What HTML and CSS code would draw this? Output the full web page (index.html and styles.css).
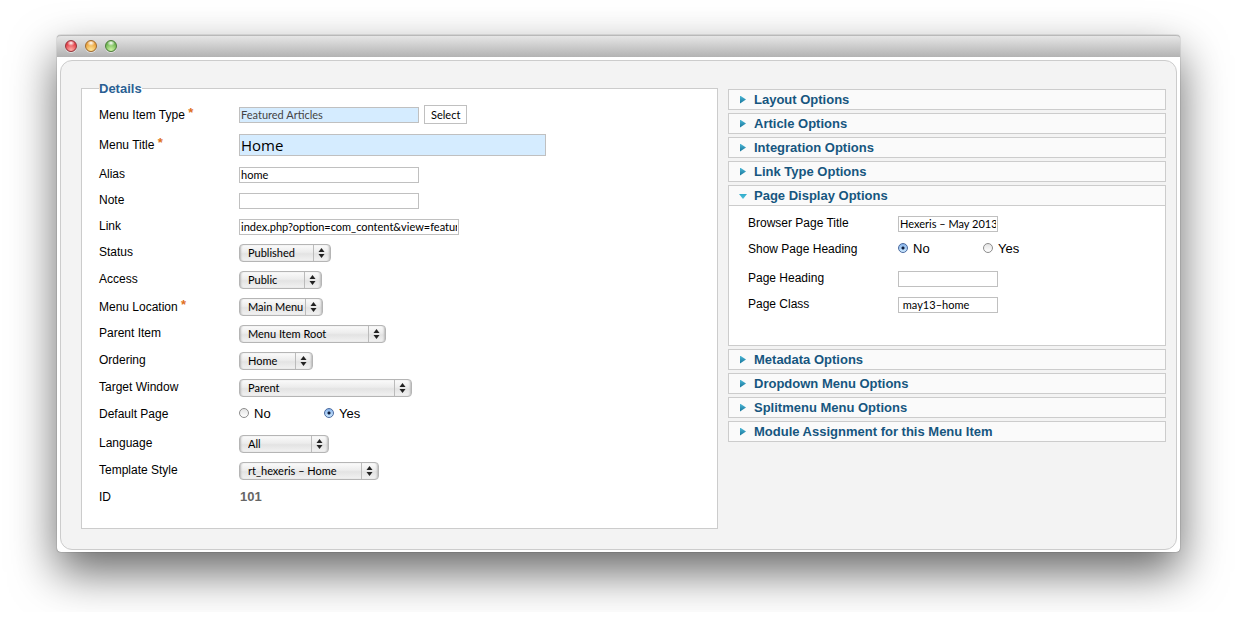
FILE: index.html
```html
<!DOCTYPE html>
<html lang="en">
<head>
<meta charset="utf-8">
<title>Edit Menu Item</title>
<link rel="stylesheet" href="styles.css">
</head>
<body>
<div class="window">
  <header class="titlebar">
    <button class="light light-red" type="button" aria-label="Close"></button>
    <button class="light light-amber" type="button" aria-label="Minimize"></button>
    <button class="light light-green" type="button" aria-label="Zoom"></button>
  </header>
  <form class="panel">
    <fieldset class="details">
      <legend>Details</legend>
      <div class="row"><label for="type">Menu Item Type <span class="star">*</span></label><div class="control"><input class="text required" id="type" type="text" value="Featured Articles" readonly><button class="select-btn" type="button">Select</button></div></div>
      <div class="row row-title"><label for="title">Menu Title <span class="star">*</span></label><div class="control"><input class="text title required" id="title" type="text" value="Home"></div></div>
      <div class="row"><label for="alias">Alias</label><div class="control"><input class="text" id="alias" type="text" value="home"></div></div>
      <div class="row"><label for="note">Note</label><div class="control"><input class="text" id="note" type="text"></div></div>
      <div class="row"><label for="link">Link</label><div class="control"><input class="text link" id="link" type="text" value="index.php?option=com_content&amp;view=featured"></div></div>
      <div class="row row-select"><label for="status">Status</label><div class="control"><select class="w-92" id="status"><option>Published</option></select></div></div>
      <div class="row row-select"><label for="access">Access</label><div class="control"><select class="w-83" id="access"><option>Public</option></select></div></div>
      <div class="row row-select"><label for="location">Menu Location <span class="star">*</span></label><div class="control"><select class="w-84" id="location"><option>Main Menu</option></select></div></div>
      <div class="row row-select"><label for="parent">Parent Item</label><div class="control"><select class="w-147" id="parent"><option>Menu Item Root</option></select></div></div>
      <div class="row row-select"><label for="ordering">Ordering</label><div class="control"><select class="w-74" id="ordering"><option>Home</option></select></div></div>
      <div class="row row-select"><label for="target">Target Window</label><div class="control"><select class="w-173" id="target"><option>Parent</option></select></div></div>
      <div class="row row-radio" role="radiogroup" aria-labelledby="default-label"><span id="default-label">Default Page</span><div class="radios"><label><input type="radio" name="default">No</label><label><input type="radio" name="default" checked>Yes</label></div></div>
      <div class="row row-select"><label for="language">Language</label><div class="control"><select class="w-90" id="language"><option>All</option></select></div></div>
      <div class="row row-select"><label for="style">Template Style</label><div class="control"><select class="w-140" id="style"><option>rt_hexeris – Home</option></select></div></div>
      <div class="row row-select"><span>ID</span><output class="id">101</output></div>
    </fieldset>
    <div class="options">
      <details><summary>Layout Options</summary></details>
      <details><summary>Article Options</summary></details>
      <details><summary>Integration Options</summary></details>
      <details><summary>Link Type Options</summary></details>
      <details open><summary>Page Display Options</summary>
        <div class="pane">
          <div class="row"><label for="page-title">Browser Page Title</label><div class="control"><input class="text small" id="page-title" type="text" value="Hexeris – May 2013"></div></div>
          <div class="row row-radio" role="radiogroup" aria-labelledby="show-label"><span id="show-label">Show Page Heading</span><div class="radios"><label><input type="radio" name="show" checked>No</label><label><input type="radio" name="show">Yes</label></div></div>
          <div class="row"><label for="heading">Page Heading</label><div class="control"><input class="text small" id="heading" type="text"></div></div>
          <div class="row"><label for="class">Page Class</label><div class="control"><input class="text small" id="class" type="text" value=" may13–home"></div></div>
        </div>
      </details>
      <details><summary>Metadata Options</summary></details>
      <details><summary>Dropdown Menu Options</summary></details>
      <details><summary>Splitmenu Menu Options</summary></details>
      <details><summary>Module Assignment for this Menu Item</summary></details>
    </div>
  </form>
</div>
</body>
</html>
```
FILE: styles.css
```css
* { box-sizing: border-box; }
body {
  margin: 0;
  padding: 35px 57px 60px;
  background: #fff;
  color: #000;
  font: 13px/16px "Liberation Sans", Arial, sans-serif;
}
.window {
  background: #fff;
  border-radius: 4px;
  box-shadow: 0 0 1px rgba(0,0,0,.8), 0 20px 46px rgba(0,0,0,.6);
  padding-bottom: 2px;
}
.titlebar {
  display: flex;
  align-items: center;
  gap: 8px;
  height: 22px;
  padding: 0 0 1px 8px;
  border-top: 1px solid #b9b9b9;
  border-radius: 4px 4px 0 0;
  background: linear-gradient(#e6e6e6, #b2b2b2);
}
.light {
  width: 12px;
  height: 12px;
  padding: 0;
  border: 1px solid;
  border-radius: 50%;
  box-shadow: 0 1px 0 rgba(255,255,255,.5);
}
.light-red { border-color: #96343a; background: radial-gradient(ellipse 4px 3px at 50% 20%, #fff, transparent), radial-gradient(circle at 50% 90%, #ffb0a8, #e0343f 75%); }
.light-amber { border-color: #a06a2c; background: radial-gradient(ellipse 4px 3px at 50% 20%, #fff, transparent), radial-gradient(circle at 50% 90%, #ffe79a, #e99d35 75%); }
.light-green { border-color: #4c7d38; background: radial-gradient(ellipse 4px 3px at 50% 20%, #fff, transparent), radial-gradient(circle at 50% 90%, #cdf5a4, #67b04b 75%); }
.panel {
  display: grid;
  grid-template-columns: minmax(0, 637fr) minmax(0, 438fr);
  align-items: start;
  gap: 10px;
  margin: 3px 3px 0;
  padding: 18px 10px 20px 20px;
  border: 1px solid #ccc;
  border-radius: 12px;
  background: #f3f3f3;
}
.details {
  min-width: 0;
  margin: 0;
  padding: 4px 17px 17px;
  border: 1px solid #ccc;
  background: #fff;
}
legend {
  padding: 2px 0 0;
  color: #2a5f93;
  font-weight: bold;
}
.row {
  display: grid;
  grid-template-columns: 140px 1fr;
  align-items: center;
  min-height: 26px;
  font-size: 12px;
}
.row-title { min-height: 34px; }
.row-select { min-height: 27px; padding-bottom: 1px; }
.row-radio { min-height: 29px; padding-bottom: 3px; }
.control { display: flex; align-items: center; gap: 5px; padding-top: 1px; }
.row-select .control { padding-top: 2px; }
.star { color: #e0701c; font-size: 13px; font-weight: bold; vertical-align: 2px; }
.text {
  width: 180px;
  height: 16px;
  padding: 0 1px;
  border: 1px solid #c0c0c0;
  border-radius: 0;
  background: #fff;
  color: #000;
  font: 11px/14px Lato, sans-serif;
}
.required { background: #d5ecff; }
.text:read-only { color: #444; }
.link { width: 220px; }
.small { width: 100px; }
.title { width: 307px; height: 22px; font: 15px/20px "Open Sans", sans-serif; }
.select-btn {
  height: 19px;
  padding: 0 6px;
  border: 1px solid #c0c0c0;
  background: #fff;
  color: #000;
  font: 11px/17px Lato, sans-serif;
}
select {
  appearance: none;
  height: 18px;
  padding: 0 18px 0 8px;
  border: 1px solid #b5b5b5;
  border-radius: 4px;
  background:
    url("data:image/svg+xml,%3Csvg xmlns='http://www.w3.org/2000/svg' width='17' height='16'%3E%3Cpath d='M.5 0v16' stroke='%23bbb'/%3E%3Cpath d='M5.500 7l3-4 3 4zM5.500 9l3 4 3-4z' fill='%23222'/%3E%3C/svg%3E") right center no-repeat,
    linear-gradient(#fbfbfb, #ececec 45%, #e3e3e3 55%, #f2f2f2);
  box-shadow: inset 2px 0 2px -1px #bbb, inset -2px 0 2px -1px #bbb;
  color: #000;
  font: 11px/16px Lato, sans-serif;
}
.w-74 { width: 74px; }
.w-83 { width: 83px; }
.w-84 { width: 84px; }
.w-90 { width: 90px; }
.w-92 { width: 92px; }
.w-140 { width: 140px; }
.w-147 { width: 147px; }
.w-173 { width: 173px; }
.radios { display: flex; font-size: 13px; }
.radios label { display: flex; align-items: center; gap: 5px; width: 85px; }
.radios input {
  appearance: none;
  width: 10px;
  height: 10px;
  margin: 0 0 3px;
  border: 1px solid #8c8c8c;
  border-radius: 50%;
  background: linear-gradient(#e4e4e4, #fff);
}
.radios input:checked {
  border-color: #4a6aa0;
  background: radial-gradient(circle, #0d1c3c 1px, transparent 2px), linear-gradient(#88b4ea, #cbe8ff);
}
.id { padding: 0 1px; color: #666; font-size: 13px; font-weight: bold; }
.options {
  display: flex;
  flex-direction: column;
  gap: 3px;
  padding-top: 10px;
}
details { border: 1px solid #ccc; background: #fafafa; }
summary {
  display: flex;
  align-items: center;
  gap: 7px;
  height: 19px;
  padding-left: 10px;
  color: #16567f;
  font-weight: bold;
  list-style: none;
}
summary::before {
  content: "";
  width: 8px;
  height: 8px;
  background: linear-gradient(#4cb8d6, #126f96);
  clip-path: polygon(1px 0, 7px 4px, 1px 8px);
}
details[open] summary::before {
  margin-top: 3px;
  background: linear-gradient(#2aa8c8, #5cc8e0);
  clip-path: polygon(0 1px, 8px 1px, 4px 6px);
}
.pane { padding: 4px 19px 28px; border-top: 1px solid #ccc; background: #fff; }
.pane .row { grid-template-columns: 150px 1fr; }
```
